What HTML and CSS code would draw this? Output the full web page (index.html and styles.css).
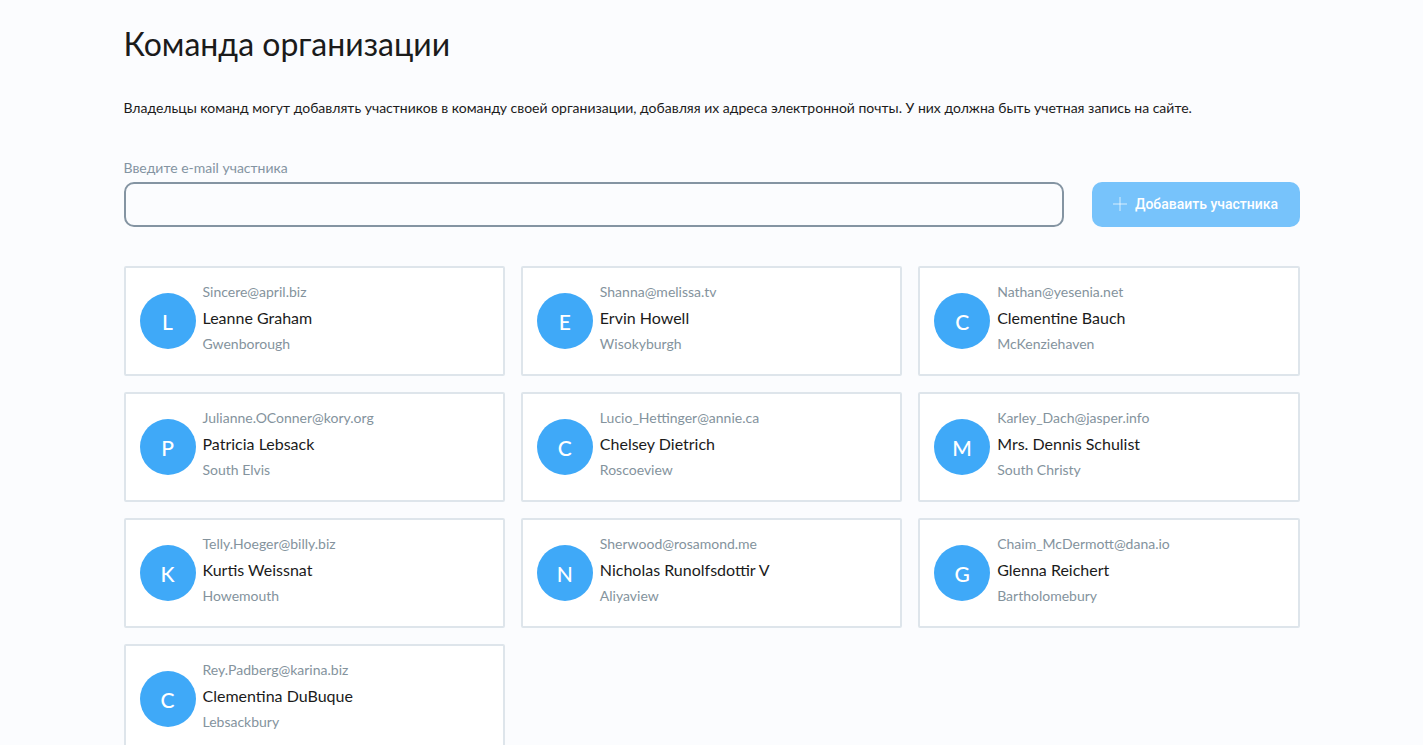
FILE: index.html
```html
<!DOCTYPE html>
<html lang="ru">
<head>
<meta charset="utf-8">
<title>Команда организации</title>
<link rel="stylesheet" href="styles.css">
</head>
<body>
<main class="page">
  <h1 class="title">Команда организации</h1>
  <p class="intro">Владельцы команд могут добавлять участников в команду своей организации, добавляя их адреса электронной почты. У них должна быть учетная запись на сайте.</p>
  <form class="invite">
    <div class="field">
      <label class="label" for="email">Введите e-mail участника</label>
      <input class="input" id="email" type="email">
    </div>
    <button class="button" type="button">
      <svg class="plus" viewBox="0 0 14 14" aria-hidden="true"><path d="M7 0v14M0 7h14"/></svg>
      <span>Добаваить участника</span>
    </button>
  </form>
  <ul class="team">
    <li class="card"><span class="avatar">L</span><div class="info"><span class="muted">Sincere@april.biz</span><span class="name">Leanne Graham</span><span class="muted">Gwenborough</span></div></li>
    <li class="card"><span class="avatar">E</span><div class="info"><span class="muted">Shanna@melissa.tv</span><span class="name">Ervin Howell</span><span class="muted">Wisokyburgh</span></div></li>
    <li class="card"><span class="avatar">C</span><div class="info"><span class="muted">Nathan@yesenia.net</span><span class="name">Clementine Bauch</span><span class="muted">McKenziehaven</span></div></li>
    <li class="card"><span class="avatar">P</span><div class="info"><span class="muted">Julianne.OConner@kory.org</span><span class="name">Patricia Lebsack</span><span class="muted">South Elvis</span></div></li>
    <li class="card"><span class="avatar">C</span><div class="info"><span class="muted">Lucio_Hettinger@annie.ca</span><span class="name">Chelsey Dietrich</span><span class="muted">Roscoeview</span></div></li>
    <li class="card"><span class="avatar">M</span><div class="info"><span class="muted">Karley_Dach@jasper.info</span><span class="name">Mrs. Dennis Schulist</span><span class="muted">South Christy</span></div></li>
    <li class="card"><span class="avatar">K</span><div class="info"><span class="muted">Telly.Hoeger@billy.biz</span><span class="name">Kurtis Weissnat</span><span class="muted">Howemouth</span></div></li>
    <li class="card"><span class="avatar">N</span><div class="info"><span class="muted">Sherwood@rosamond.me</span><span class="name">Nicholas Runolfsdottir V</span><span class="muted">Aliyaview</span></div></li>
    <li class="card"><span class="avatar">G</span><div class="info"><span class="muted">Chaim_McDermott@dana.io</span><span class="name">Glenna Reichert</span><span class="muted">Bartholomebury</span></div></li>
    <li class="card"><span class="avatar">C</span><div class="info"><span class="muted">Rey.Padberg@karina.biz</span><span class="name">Clementina DuBuque</span><span class="muted">Lebsackbury</span></div></li>
  </ul>
</main>
</body>
</html>
```
FILE: styles.css
```css
* { box-sizing: border-box; }
body {
  margin: 0;
  background: #fbfcfe;
  color: #1b1b1b;
  font-family: Lato, sans-serif;
  overflow-x: hidden;
  scrollbar-width: none;
}
.page {
  max-width: 1224px;
  margin: 0 auto;
  padding: 24px 24px 40px;
}
.title {
  margin: 0;
  font-size: 32px;
  line-height: 40px;
  font-weight: 400;
}
.intro {
  margin: 32px 0 37px;
  font-size: 14px;
  line-height: 24px;
}
.invite {
  display: flex;
  align-items: flex-end;
  gap: 28px;
}
.field {
  display: flex;
  flex: 1;
  flex-direction: column;
  gap: 3px;
}
.label {
  color: #8494a2;
  font-size: 14px;
  line-height: 22px;
}
.input {
  height: 45px;
  padding: 0 12px;
  border: 2px solid #8494a2;
  border-radius: 10px;
  background: transparent;
  font: inherit;
}
.button {
  display: flex;
  align-items: center;
  justify-content: center;
  gap: 8px;
  width: 208px;
  height: 45px;
  padding: 0 0 2px;
  border: 0;
  border-radius: 10px;
  background: #77c3fb;
  color: #fff;
  font: 500 14px/20px Roboto, sans-serif;
}
.plus {
  width: 14px;
  height: 14px;
  fill: none;
  stroke: currentColor;
  stroke-opacity: 0.7;
}
.team {
  display: grid;
  grid-template-columns: repeat(3, 1fr);
  gap: 16px;
  margin: 39px 0 0;
  padding: 0;
  list-style: none;
}
.card {
  display: flex;
  align-items: center;
  gap: 7px;
  min-height: 110px;
  padding: 0 14px;
  border: 2px solid #dee5eb;
  border-radius: 2px;
  background: #fff;
}
.avatar {
  display: flex;
  flex: none;
  align-items: center;
  justify-content: center;
  width: 56px;
  height: 56px;
  padding-top: 2px;
  border-radius: 50%;
  background: #3fa9f8;
  color: #fff;
  font-size: 21px;
  font-weight: 500;
  line-height: 24px;
}
.info {
  display: flex;
  flex-direction: column;
  padding-bottom: 8px;
}
.muted {
  color: #84939d;
  font-size: 14px;
  line-height: 25px;
}
.name {
  font-size: 16px;
  line-height: 27px;
}
```
